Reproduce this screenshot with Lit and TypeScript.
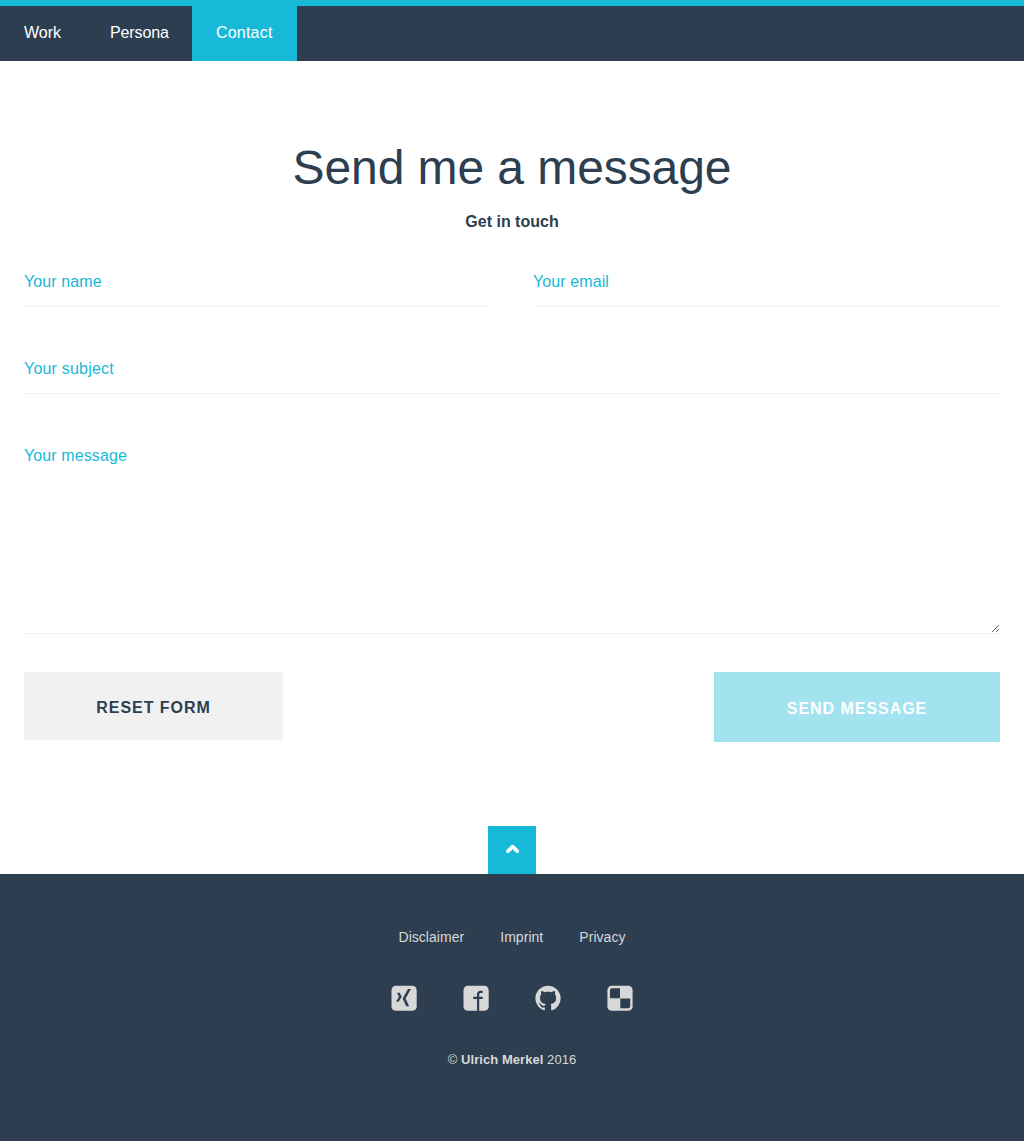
import { LitElement, html, css } from "lit";
import { customElement } from "lit/decorators.js";

@customElement("app-root")
export class AppRoot extends LitElement {
  static styles = css`
    :host {
      display: block;
      font-family: "Liberation Sans", Arial, sans-serif;
      font-size: 16px;
      color: #2c3e50;
      background: #fff;
    }
    * { box-sizing: border-box; }
    a { color: inherit; text-decoration: none; }
    .page { display: flex; flex-direction: column; height: 1141px; }
    .nav {
      display: flex;
      height: 61px;
      border-top: 6px solid #16b9d7;
      background: #2c3e50;
      color: #fff;
    }
    .tab { padding: 17px 0 0 24px; line-height: 20px; white-space: nowrap; }
    .work { width: 86px; }
    .persona { width: 106px; letter-spacing: -0.1px; }
    .contact { width: 105px; background: #16b9d7; letter-spacing: 0.2px; }
    .main { flex: 1; padding: 77px 24px 0; }
    h1 {
      margin: 0;
      font-size: 48px;
      font-weight: 400;
      line-height: 60px;
      text-align: center;
      letter-spacing: -0.08px;
    }
    .lead {
      margin: 13px 0 0;
      font-weight: 700;
      line-height: 22px;
      text-align: center;
    }
    .fields {
      display: grid;
      grid-template-columns: 467px 467px;
      justify-content: space-between;
      row-gap: 36px;
      margin-top: 23px;
    }
    .wide { grid-column: 1 / -1; }
    .field {
      display: block;
      width: 100%;
      height: 51px;
      margin: 0;
      padding: 2px 0 0;
      border: 0;
      border-bottom: 1px solid #f0f0f0;
      border-radius: 0;
      outline: 0;
      background: transparent;
      color: #2c3e50;
      font: inherit;
      letter-spacing: 0.1px;
    }
    .subject { letter-spacing: 0.2px; }
    .field::placeholder { color: #16b9d7; opacity: 1; }
    .message { height: 204px; padding: 16px 0; line-height: 20px; resize: vertical; }
    .actions {
      display: flex;
      justify-content: space-between;
      align-items: flex-start;
      margin-top: 38px;
    }
    .btn {
      margin: 0;
      padding: 4px 0 0;
      border: 0;
      font: 700 16px "Liberation Sans", Arial, sans-serif;
      letter-spacing: 0.96px;
      text-transform: uppercase;
    }
    .reset { width: 259px; height: 68px; background: #f1f1f1; color: #2c3e50; }
    .send { width: 286px; height: 70px; background: #a2e3ef; color: #fff; }
    .top {
      display: flex;
      align-self: center;
      width: 48px;
      height: 48px;
      background: #16b9d7;
    }
    .top svg { display: block; }
    .footer {
      display: flex;
      flex-direction: column;
      align-items: center;
      height: 267px;
      padding-top: 53px;
      background: #2c3e50;
      color: #d8d8d8;
    }
    .links {
      display: flex;
      gap: 36px;
      font-size: 14px;
      line-height: 20px;
      letter-spacing: 0.04px;
    }
    .social { display: flex; gap: 46px; margin-top: 38px; }
    .icon { display: block; width: 26px; height: 26px; }
    .copy { margin: 39px 0 0; font-size: 13px; line-height: 20px; letter-spacing: 0.06px; }
  `;

  render() {
    return html`
      <div class="page">
        <nav class="nav">
          <a class="tab work" href="#">Work</a>
          <a class="tab persona" href="#">Persona</a>
          <a class="tab contact" href="#">Contact</a>
        </nav>
        <main class="main">
          <h1>Send me a message</h1>
          <p class="lead">Get in touch</p>
          <form>
            <div class="fields">
              <input class="field" placeholder="Your name" />
              <input class="field" placeholder="Your email" />
              <input class="field wide subject" placeholder="Your subject" />
              <textarea class="field wide message" placeholder="Your message"></textarea>
            </div>
            <div class="actions">
              <button class="btn reset" type="reset">Reset form</button>
              <button class="btn send" type="button">Send message</button>
            </div>
          </form>
        </main>
        <a class="top" href="#">
          <svg width="48" height="48" viewBox="0 0 48 48" fill="none" stroke="#fff" stroke-width="3.7" stroke-linecap="round" stroke-linejoin="round">
            <path d="M20 25.1 24.6 20.7 29.2 25.1" />
          </svg>
        </a>
        <footer class="footer">
          <div class="links">
            <a href="#">Disclaimer</a><a href="#">Imprint</a><a href="#">Privacy</a>
          </div>
          <div class="social">
            <svg class="icon" viewBox="0 0 26 26">
              <rect x="0.5" y="0.8" width="25.2" height="25" rx="4.4" fill="#d8d8d8" />
              <path fill="#2c3e50" d="M6 7.7h2.7l2 4.1-3 5H5l3-5zM17 3.9h2.9l-5.3 9.6 3.5 7.8h-2.9l-3.6-7.8z" />
            </svg>
            <svg class="icon" viewBox="0 0 26 26">
              <rect x="0.5" y="0.8" width="25.2" height="25" rx="4.4" fill="#d8d8d8" />
              <path fill="#2c3e50" d="M14 25.8V13.9h-3.7v-2.1H14V9.7c0-2.5 1.3-3.9 3.8-3.9h1.9v2.1h-1.6c-1.4 0-1.9.6-1.9 1.9v2h3.5v2.1h-3.5v11.9z" />
            </svg>
            <svg class="icon" viewBox="0 0 26 26">
              <g transform="translate(0.4 0.7) scale(1.58)">
                <path fill="#d8d8d8" d="M8 0C3.58 0 0 3.58 0 8c0 3.54 2.29 6.53 5.47 7.59.4.07.55-.17.55-.38 0-.19-.01-.82-.01-1.49-2.01.37-2.53-.49-2.69-.94-.09-.23-.48-.94-.82-1.13-.28-.15-.68-.52-.01-.53.63-.01 1.08.58 1.23.82.72 1.21 1.87.87 2.33.66.07-.52.28-.87.51-1.07-1.78-.2-3.64-.89-3.64-3.95 0-.87.31-1.59.82-2.15-.08-.2-.36-1.02.08-2.12 0 0 .67-.21 2.2.82.64-.18 1.32-.27 2-.27s1.36.09 2 .27c1.53-1.04 2.2-.82 2.2-.82.44 1.1.16 1.92.08 2.12.51.56.82 1.27.82 2.15 0 3.07-1.87 3.75-3.65 3.95.29.25.54.73.54 1.48 0 1.07-.01 1.93-.01 2.2 0 .21.15.46.55.38A8.01 8.01 0 0 0 16 8c0-4.42-3.58-8-8-8z" />
              </g>
            </svg>
            <svg class="icon" viewBox="0 0 26 26">
              <rect x="0.4" y="0.8" width="25.2" height="25" rx="4.4" fill="#d8d8d8" />
              <path fill="#2c3e50" d="M5 3.2H13v10H3V5.2Q3 3.2 5 3.2zM13.3 13.5h9.9v7.7q0 2-2 2h-7.9z" />
            </svg>
          </div>
          <p class="copy">© <b>Ulrich Merkel</b> 2016</p>
        </footer>
      </div>
    `;
  }
}
